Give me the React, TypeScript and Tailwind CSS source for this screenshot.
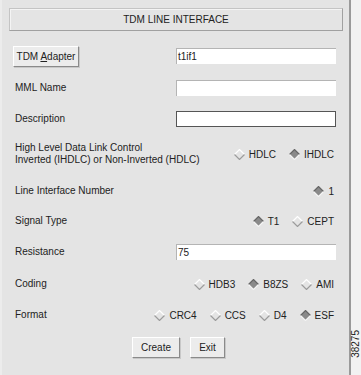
import React from "react";

function Diamond({ on }: { on?: boolean }) {
  return (
    <svg width="11" height="11" viewBox="0 0 11 11" className="shrink-0">
      <polygon points="5.5,0.5 10.5,5.5 5.5,10.5 0.5,5.5" fill={on ? "#8a8a8a" : "#e4e4e4"} />
      <polyline points="0.5,5.5 5.5,0.5 10.5,5.5" fill="none" stroke={on ? "#666" : "#ffffff"} strokeWidth="1.2" />
      <polyline points="0.5,5.5 5.5,10.5 10.5,5.5" fill="none" stroke={on ? "#f4f4f4" : "#9c9c9c"} strokeWidth="1.2" />
    </svg>
  );
}

function Radio({ label, on }: { label: string; on?: boolean }) {
  return (
    <div className="flex items-center gap-[4px]">
      <Diamond on={on} />
      <span>{label}</span>
    </div>
  );
}

function Field({ value, focused }: { value?: string; focused?: boolean }) {
  return (
    <div
      className={`w-[160px] h-[16px] bg-white flex items-center px-[1px] text-[10px] ${
        focused
          ? "border border-[#555]"
          : "border-t border-l border-[#b4b4b4] border-b-0 border-r-0"
      }`}
    >
      {value}
    </div>
  );
}

function Button({ children, w }: { children: React.ReactNode; w: string }) {
  return (
    <button
      type="button"
      className={`${w} h-[21px] bg-[#ececec] border border-t-white border-l-white border-b-[#8a8a8a] border-r-[#8a8a8a] shadow-[1px_1px_0_#c8c8c8] text-[10px] flex items-center justify-center`}
    >
      {children}
    </button>
  );
}

function Row({ label, children, top }: { label: React.ReactNode; children: React.ReactNode; top: string }) {
  return (
    <div className={`${top} h-[24px] flex items-center justify-between pl-[13px] pr-[13px]`}>
      <div className="leading-[12px]">{label}</div>
      <div className="flex items-center">{children}</div>
    </div>
  );
}

export default function App() {
  return (
    <div
      className="w-[361px] h-[375px] flex bg-[#e4e4e4] text-[10px] text-[#222] overflow-hidden"
      style={{ fontFamily: "'Liberation Sans', Arial, sans-serif" }}
    >
      <div className="w-[351px] flex flex-col border-l-2 border-[#ececec]">
        <div className="mt-[8px] ml-[7px] w-[334px] h-[23px] border border-t-[#c4c4c4] border-l-[#c4c4c4] border-b-[#a0a0a0] border-r-[#a0a0a0] shadow-[inset_1px_1px_0_#f4f4f4] flex items-center justify-center">
          TDM LINE INTERFACE
        </div>

        <div className="mt-[13px] h-[24px] flex items-center justify-between pl-[11px] pr-[13px]">
          <Button w="w-[66px]">
            <span>
              TDM <span className="underline">A</span>dapter
            </span>
          </Button>
          <Field value="t1if1" />
        </div>

        <Row label="MML Name" top="mt-[8px]">
          <Field />
        </Row>
        <Row label="Description" top="mt-[7px]">
          <Field focused />
        </Row>

        <div className="mt-[8px] h-[30px] flex items-center justify-between pl-[13px] pr-[15px]">
          <div className="leading-[12px]">
            High Level Data Link Control
            <br />
            Inverted (IHDLC) or Non-Inverted (HDLC)
          </div>
          <div className="flex items-center gap-[13px]">
            <Radio label="HDLC" />
            <Radio label="IHDLC" on />
          </div>
        </div>

        <Row label="Line Interface Number" top="mt-[10px]">
          <div className="pr-[2px]">
            <Radio label="1" on />
          </div>
        </Row>
        <Row label="Signal Type" top="mt-[6px]">
          <div className="flex items-center gap-[13px] pr-[2px]">
            <Radio label="T1" on />
            <Radio label="CEPT" />
          </div>
        </Row>
        <Row label="Resistance" top="mt-[7px]">
          <Field value="75" />
        </Row>
        <Row label="Coding" top="mt-[8px]">
          <div className="flex items-center gap-[13px] pr-[2px]">
            <Radio label="HDB3" />
            <Radio label="B8ZS" on />
            <Radio label="AMI" />
          </div>
        </Row>
        <Row label="Format" top="mt-[7px]">
          <div className="flex items-center gap-[13px] pr-[2px]">
            <Radio label="CRC4" />
            <Radio label="CCS" />
            <Radio label="D4" />
            <Radio label="ESF" on />
          </div>
        </Row>

        <div className="mt-[10px] flex justify-center gap-[10px] pl-[6px]">
          <Button w="w-[48px]">Create</Button>
          <Button w="w-[35px]">Exit</Button>
        </div>
      </div>

      <div className="w-[2px] bg-[#9a9a9a]" />
      <div className="flex-1 bg-[#f2f2f2] flex flex-col justify-end items-center pb-[17px]">
        <span className="[writing-mode:vertical-rl] rotate-180 text-[10px] leading-[10px]">38275</span>
      </div>
    </div>
  );
}
